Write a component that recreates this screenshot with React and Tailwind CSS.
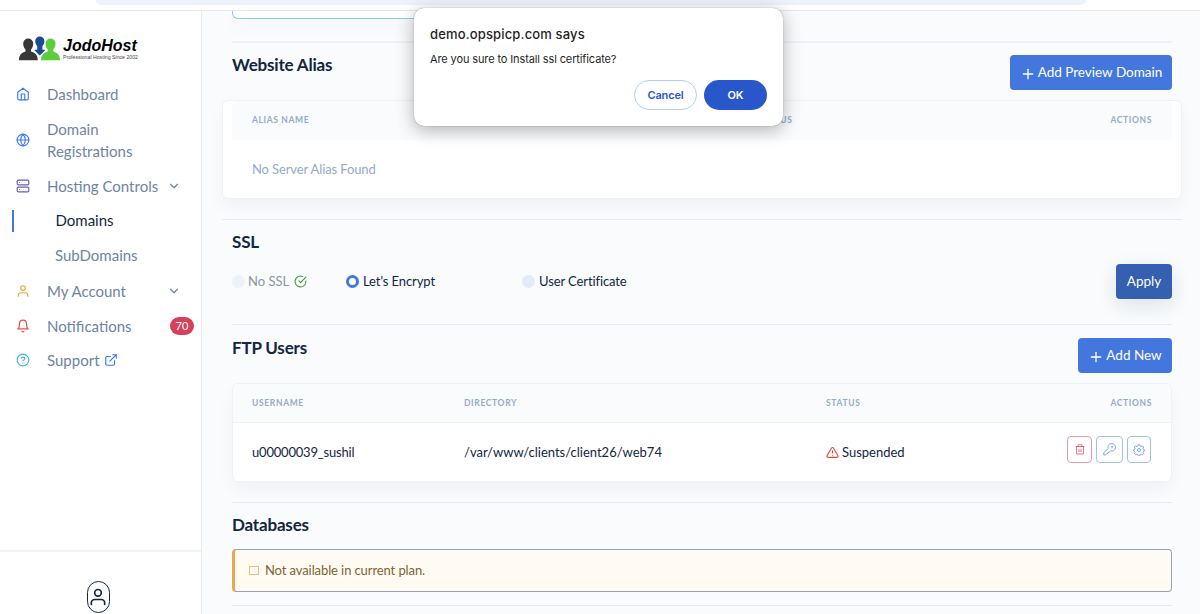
import {
  FiHome,
  FiGlobe,
  FiServer,
  FiUser,
  FiBell,
  FiHelpCircle,
  FiExternalLink,
  FiCheckCircle,
  FiPlus,
  FiAlertTriangle,
  FiChevronDown,
} from "react-icons/fi";

function Logo() {
  return (
    <div className="ml-[18px] flex h-[26px] items-start">
      <svg width="43" height="26" viewBox="0 0 43 26">
        <path d="M17.200 5a4.600 4.600 0 1 1 9.200 0c0 2.500-1.200 4-2 5v3.500l3 .5-5.600 5.500L16.200 14l3-.5V10c-.8-1-2-2.500-2-5z" fill="#1d4a94" />
        <path d="M5.200 7.500a5 5 0 1 1 10 0c0 2.800-1 4.800-2.200 6v2c3.500 1 6.800 3 6.800 8.800H1c0-5.800 3-7.800 6.500-8.800v-2c-1.300-1.200-2.300-3.200-2.300-6z" fill="#383838" />
        <path d="M27.500 7.500a5 5 0 1 1 10 0c0 2.800-1 4.800-2.200 6v2c3.500 1 6.700 3 6.700 8.800H23c0-5.800 3.200-7.800 6.700-8.800v-2c-1.200-1.200-2.200-3.200-2.200-6z" fill="#5cce3e" />
      </svg>
      <div className="ml-[2px] mt-px whitespace-nowrap">
        <div className="text-[16px] font-bold italic leading-[18px] text-black font-['Liberation_Sans']">JodoHost</div>
        <div className="-mt-px text-[5.200px] leading-[6px] text-[#444] font-['Liberation_Sans']">Professional Hosting Since 2002</div>
      </div>
    </div>
  );
}

function NavItem({ icon: Icon, color, label, children, className = "h-[35px]" }) {
  return (
    <a className={`flex items-center pl-[15.500px] text-[15px] leading-[22px] text-[#6e84a3] ${className}`}>
      <Icon size={14} className={color} />
      <span className="ml-[17.500px]">{label}</span>
      {children}
    </a>
  );
}

function Sidebar() {
  return (
    <aside className="flex w-[202px] flex-none flex-col border-r border-[#e3ebf6] bg-white">
      <div className="pt-[25px]">
        <Logo />
      </div>
      <nav className="mt-[14px]">
        <NavItem icon={FiHome} color="text-[#3f7be8]" label="Dashboard" />
        <NavItem icon={FiGlobe} color="text-[#3f7be8]" className="h-[57px]" label={<>Domain<br />Registrations</>} />
        <NavItem icon={FiServer} color="text-[#6b5eae]" label="Hosting Controls">
          <FiChevronDown size={14} className="ml-auto mr-5" />
        </NavItem>
        <a className="flex h-[35px] items-center pl-3 text-[15px] text-[#12263f]">
          <span className="h-[22px] w-0.5 bg-[#4377de]" />
          <span className="ml-[41.500px]">Domains</span>
        </a>
        <a className="flex h-[35px] items-center pl-[55px] text-[15px] text-[#6e84a3]">SubDomains</a>
        <NavItem icon={FiUser} color="text-[#eba43c]" label="My Account">
          <FiChevronDown size={14} className="ml-auto mr-5" />
        </NavItem>
        <NavItem icon={FiBell} color="text-[#e8563f]" label="Notifications">
          <span className="ml-auto mr-[7px] flex h-[18px] w-[24px] items-center justify-center rounded-full bg-[#d5405a] text-[11px] text-white">
            70
          </span>
        </NavItem>
        <NavItem icon={FiHelpCircle} color="text-[#45b5d5]" className="h-[34px]" label="Support">
          <FiExternalLink size={14} className="ml-1 text-[#3f7be8]" />
        </NavItem>
      </nav>
      <div className="mt-auto flex h-[64px] justify-center border-t-2 border-[#f1f5fa] pr-[5px] pt-[29px]">
        <div className="flex h-[32px] w-[23px] items-center justify-center rounded-full border border-[#12263f]">
          <FiUser size={20} className="text-[#12263f]" />
        </div>
      </div>
    </aside>
  );
}

function Th({ children, className = "" }) {
  return (
    <span className={`text-[8.500px] font-bold uppercase tracking-[0.65px] text-[#95aac9] ${className}`}>
      {children}
    </span>
  );
}

function Title({ children }) {
  return <h2 className="text-[17px] font-bold leading-5 tracking-[-0.18px] text-[#12263f]">{children}</h2>;
}

function Button({ children, className }) {
  return (
    <button className={`flex h-[35px] items-center justify-center rounded text-[13.500px] text-white ${className}`}>
      {children}
    </button>
  );
}

function ActionButton({ children, className }) {
  return (
    <button className={`flex h-[27px] items-center justify-center rounded border ${className}`}>{children}</button>
  );
}

function TrashIcon() {
  return (
    <svg width="10" height="11" viewBox="0 0 10 11" fill="none" stroke="currentColor" strokeWidth="0.900">
      <path d="M.5 2.500h9M3 2.500V.8h4v1.700M1.500 2.500v7.500h7V2.500M4 5v3M6 5v3" />
    </svg>
  );
}

function KeyIcon() {
  return (
    <svg width="13" height="13" viewBox="0 0 13 13" fill="none" stroke="currentColor" strokeWidth="0.900">
      <path d="M5 5.500A3.800 3.800 0 1 1 7.500 8L6.300 9.200H5v1.300H3.800L2.500 12H.8v-2.200z" />
      <circle cx="9.200" cy="3.800" r=".6" />
    </svg>
  );
}

function GearIcon() {
  return (
    <svg width="12" height="12" viewBox="0 0 12 12" fill="none" stroke="currentColor" strokeWidth="0.900">
      <circle cx="6" cy="6" r="1.500" />
      <path d="M5.200.8h1.600l.4 1.300 1 .4 1.300-.6 1.100 1.100-.6 1.300.4 1 .9.300v1.400l-.9.400-.4 1 .6 1.200-1.100 1.100-1.300-.6-1 .4-.4 1.300H5.200l-.4-1.300-1-.4-1.300.6-1.100-1.100.6-1.200-.4-1-.9-.4V5.600l.9-.300.4-1-.6-1.300 1.100-1.100 1.300.6 1-.4z" strokeLinejoin="round" />
    </svg>
  );
}

function Dialog() {
  return (
    <div className="absolute left-[414px] top-[8px] h-[118px] w-[369px] rounded-[10px] bg-white px-4 pt-[17px] font-['Inter',sans-serif] text-[#1f1f1f] shadow-[0_4px_18px_rgba(0,0,0,0.3),0_0_1px_rgba(0,0,0,0.5)]">
      <div className="text-[13px] font-medium leading-[18px] tracking-[0.15px]">demo.opspicp.com says</div>
      <div className="mt-2 text-[11px] leading-4 tracking-[-0.12px]">Are you sure to Install ssl certificate?</div>
      <div className="mt-[13px] flex justify-end gap-[7px] text-[11px] font-semibold tracking-[-0.15px]">
        <button className="h-[30px] w-[63px] rounded-full border border-[#b3cbfa] text-[#2757ca]">Cancel</button>
        <button className="h-[30px] w-[63px] rounded-full bg-[#2757ca] text-white">OK</button>
      </div>
    </div>
  );
}

export default function App() {
  return (
    <div className="relative flex h-[614px] w-[1200px] flex-col overflow-hidden bg-[#f9fbfd] font-['Lato',sans-serif] text-[#12263f]">
      <div className="h-[11px] flex-none border-b border-[#e6e6e6] bg-white">
        <div className="ml-[96px] h-[5px] w-[990px] rounded-b-[10px] bg-[#edf2fb]" />
      </div>
      <div className="flex min-h-0 flex-1">
        <Sidebar />
        <main className="flex-1 pl-[30px] pr-[28px]">
          <div className="h-[8px] w-[460px] rounded-b-md border border-t-0 border-[#8ccbe4] bg-white shadow-[0_8px_18px_rgba(18,38,63,0.04)]" />

          <section className="mt-[22px] border-t-2 border-[#edf2f9]">
            <div className="flex h-[57px] justify-between pt-[12px]">
              <Title>Website Alias</Title>
              <Button className="w-[162px] gap-[2px] bg-[#4377de]">
                <FiPlus size={16} className="mt-0.5" />Add Preview Domain
              </Button>
            </div>
            <div className="-mx-2.5 h-[99px] rounded-md border border-[#edf2f9] bg-white px-[9px] shadow-[0_8px_18px_rgba(18,38,63,0.04)]">
              <div className="flex h-[39px] items-center justify-between rounded-t-md bg-[#f9fbfd] px-5">
                <Th className="w-[506px]">Alias Name</Th>
                <Th className="mr-auto">Status</Th>
                <Th>Actions</Th>
              </div>
              <div className="px-5 pt-[19px] text-[13px] leading-5 tracking-[-0.12px] text-[#95aac9]">No Server Alias Found</div>
            </div>
          </section>

          <section className="-mx-2.5 mt-5 h-[105px] border-t border-[#e3ebf6] px-2.5 pt-[12px]">
            <Title>SSL</Title>
            <div className="mt-[12px] flex h-[35px] items-center text-[13px]">
              <div className="flex w-[114px] items-center text-[#8c95a5]">
                <span className="mr-[3px] h-[13px] w-[13px] rounded-full bg-[#edf1f9]" />
                No SSL
                <FiCheckCircle size={13} className="ml-[5px] text-[#43963a]" />
              </div>
              <div className="flex w-[176px] items-center">
                <span className="mr-[4px] h-[13px] w-[13px] rounded-full border-[3.500px] border-[#4377de] bg-white" />
                <span className="tracking-[-0.1px]">Let's Encrypt</span>
              </div>
              <div className="flex items-center">
                <span className="mr-[4px] h-[13px] w-[13px] rounded-full bg-[#e3ebf6]" />
                <span className="tracking-[-0.1px]">User Certificate</span>
              </div>
              <Button className="ml-auto w-[56px] bg-[#3460af] shadow-[0_6px_20px_rgba(18,38,63,0.12)]">Apply</Button>
            </div>
          </section>

          <section className="border-t border-[#e3ebf6]">
            <div className="flex h-[58px] justify-between pt-[13px]">
              <Title>FTP Users</Title>
              <Button className="w-[94px] gap-[2px] bg-[#4377de]">
                <FiPlus size={16} className="mt-0.5" />Add New
              </Button>
            </div>
            <div className="h-[99px] rounded-md border border-[#edf2f9] bg-white shadow-[0_8px_18px_rgba(18,38,63,0.04)]">
              <div className="flex h-[39px] items-center rounded-t-md border-b border-[#edf2f9] bg-[#f9fbfd] px-[19px]">
                <Th className="w-[212px]">Username</Th>
                <Th className="w-[362px]">Directory</Th>
                <Th className="mr-auto">Status</Th>
                <Th>Actions</Th>
              </div>
              <div className="flex h-[59px] items-center px-[19px] text-[13px]">
                <span className="w-[212px] tracking-[-0.2px]">u00000039_sushil</span>
                <span className="w-[362px]">/var/www/clients/client26/web74</span>
                <span className="flex items-center gap-[3px]">
                  <FiAlertTriangle size={13} className="text-[#e8462f]" />
                  Suspended
                </span>
                <div className="mb-[6px] ml-auto mr-px flex gap-1">
                  <ActionButton className="w-[25px] border-[#eb9aa7] text-[#e0687c]"><TrashIcon /></ActionButton>
                  <ActionButton className="w-[27px] border-[#a3bff1] text-[#6c97e8]"><KeyIcon /></ActionButton>
                  <ActionButton className="w-[24px] border-[#a3bff1] text-[#6c97e8]"><GearIcon /></ActionButton>
                </div>
              </div>
            </div>
          </section>

          <section className="mt-5 border-t border-[#e3ebf6] pt-[12px]">
            <Title>Databases</Title>
            <div className="mt-[14px] flex h-[43px] items-center rounded border border-l-[3px] border-[#95a3b5] border-l-[#e6a94e] bg-[#fffbf3] pl-[14px] text-[13px] tracking-[-0.1px] text-[#7d6333]">
              <span className="mr-[6px] h-[9px] w-[10px] border-[1.500px] border-[#efc07c]" />
              Not available in current plan.
            </div>
            <hr className="mt-[13px] border-[#e3ebf6]" />
          </section>
        </main>
      </div>
      <Dialog />
    </div>
  );
}
